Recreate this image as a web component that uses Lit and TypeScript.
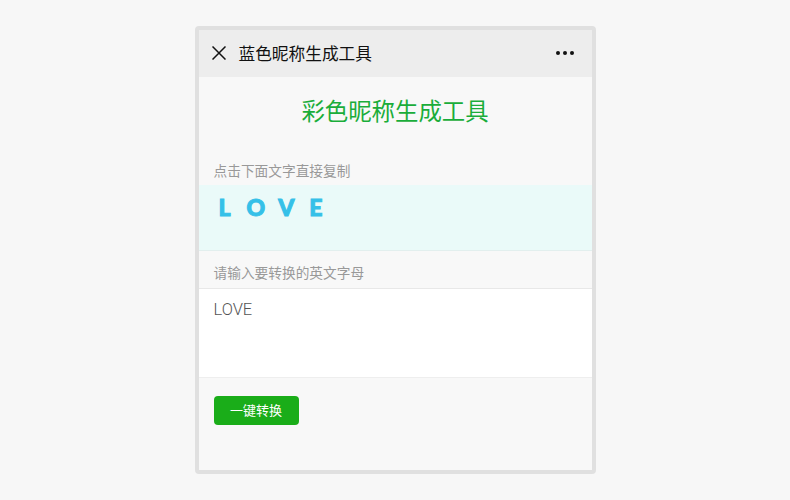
import { LitElement, html, css } from "lit";
import { customElement } from "lit/decorators.js";

@customElement("app-root")
export class AppRoot extends LitElement {
  static styles = css`
    :host {
      display: flex;
      justify-content: center;
      align-items: flex-start;
      box-sizing: border-box;
      width: 790px;
      height: 500px;
      padding-top: 26px;
      background: #f7f7f7;
      font-family: "Noto Sans CJK SC", "Liberation Sans", sans-serif;
    }
    .phone {
      box-sizing: border-box;
      width: 401px;
      height: 448px;
      border: 4px solid #e0e0e0;
      border-radius: 4px;
      background: #f8f8f8;
      display: flex;
      flex-direction: column;
    }
    .header {
      box-sizing: border-box;
      flex: none;
      height: 47px;
      background: #ededed;
      display: flex;
      align-items: center;
      padding: 0 18px 1px 13px;
    }
    .close {
      width: 14px;
      height: 14px;
      margin-right: 13px;
      flex: none;
    }
    .head-title {
      flex: 1;
      font-size: 16.7px;
      line-height: 24px;
      color: #111;
    }
    .dots {
      display: flex;
      gap: 3px;
    }
    .dots i {
      width: 4px;
      height: 4px;
      border-radius: 50%;
      background: #111;
    }
    .title {
      margin: 19px 0 0;
      height: 28px;
      font-size: 23.4px;
      line-height: 28px;
      font-weight: 400;
      text-align: center;
      color: #1aad3a;
    }
    .label {
      padding-left: 15px;
      font-size: 13.7px;
      line-height: 20px;
      color: #999;
    }
    .l1 {
      margin-top: 36px;
    }
    .result {
      box-sizing: border-box;
      height: 66px;
      margin-top: 5px;
      padding: 8px 0 0 20px;
      background: #eafaf9;
      border-bottom: 1px solid #e2efee;
      color: #35c0e8;
      font-family: "Lato", sans-serif;
      font-weight: 900;
      font-size: 23px;
      line-height: 28px;
      letter-spacing: 16px;
      -webkit-text-stroke: 1px #35c0e8;
    }
    .tight {
      letter-spacing: 13px;
    }
    .wide {
      letter-spacing: 15px;
    }
    .l2 {
      margin-top: 11px;
    }
    .input {
      box-sizing: border-box;
      height: 90px;
      margin-top: 6px;
      padding: 9px 15px;
      background: #fff;
      border-top: 1px solid #e8e8e8;
      border-bottom: 1px solid #eeeeee;
      font-family: "Roboto", sans-serif;
      font-weight: 300;
      font-size: 16.5px;
      line-height: 24px;
      color: #555;
    }
    .btn {
      box-sizing: border-box;
      align-self: flex-start;
      margin: 18px 0 0 15px;
      width: 85px;
      height: 29px;
      border-radius: 4px;
      background: #1aad19;
      color: #fff;
      font-size: 13px;
      line-height: 27px;
      text-align: center;
    }
  `;

  render() {
    return html`
      <div class="phone">
        <div class="header">
          <svg class="close" viewBox="0 0 14 14" fill="none" stroke="#111" stroke-width="1.5">
            <path d="M.5.5l13 13M13.5.5l-13 13" />
          </svg>
          <div class="head-title">蓝色昵称生成工具</div>
          <div class="dots"><i></i><i></i><i></i></div>
        </div>
        <h1 class="title">彩色昵称生成工具</h1>
        <div class="label l1">点击下面文字直接复制</div>
        <div class="result">L<span class="tight">O</span><span class="wide">V</span>E</div>
        <div class="label l2">请输入要转换的英文字母</div>
        <div class="input">LOVE</div>
        <div class="btn">一键转换</div>
      </div>
    `;
  }
}
